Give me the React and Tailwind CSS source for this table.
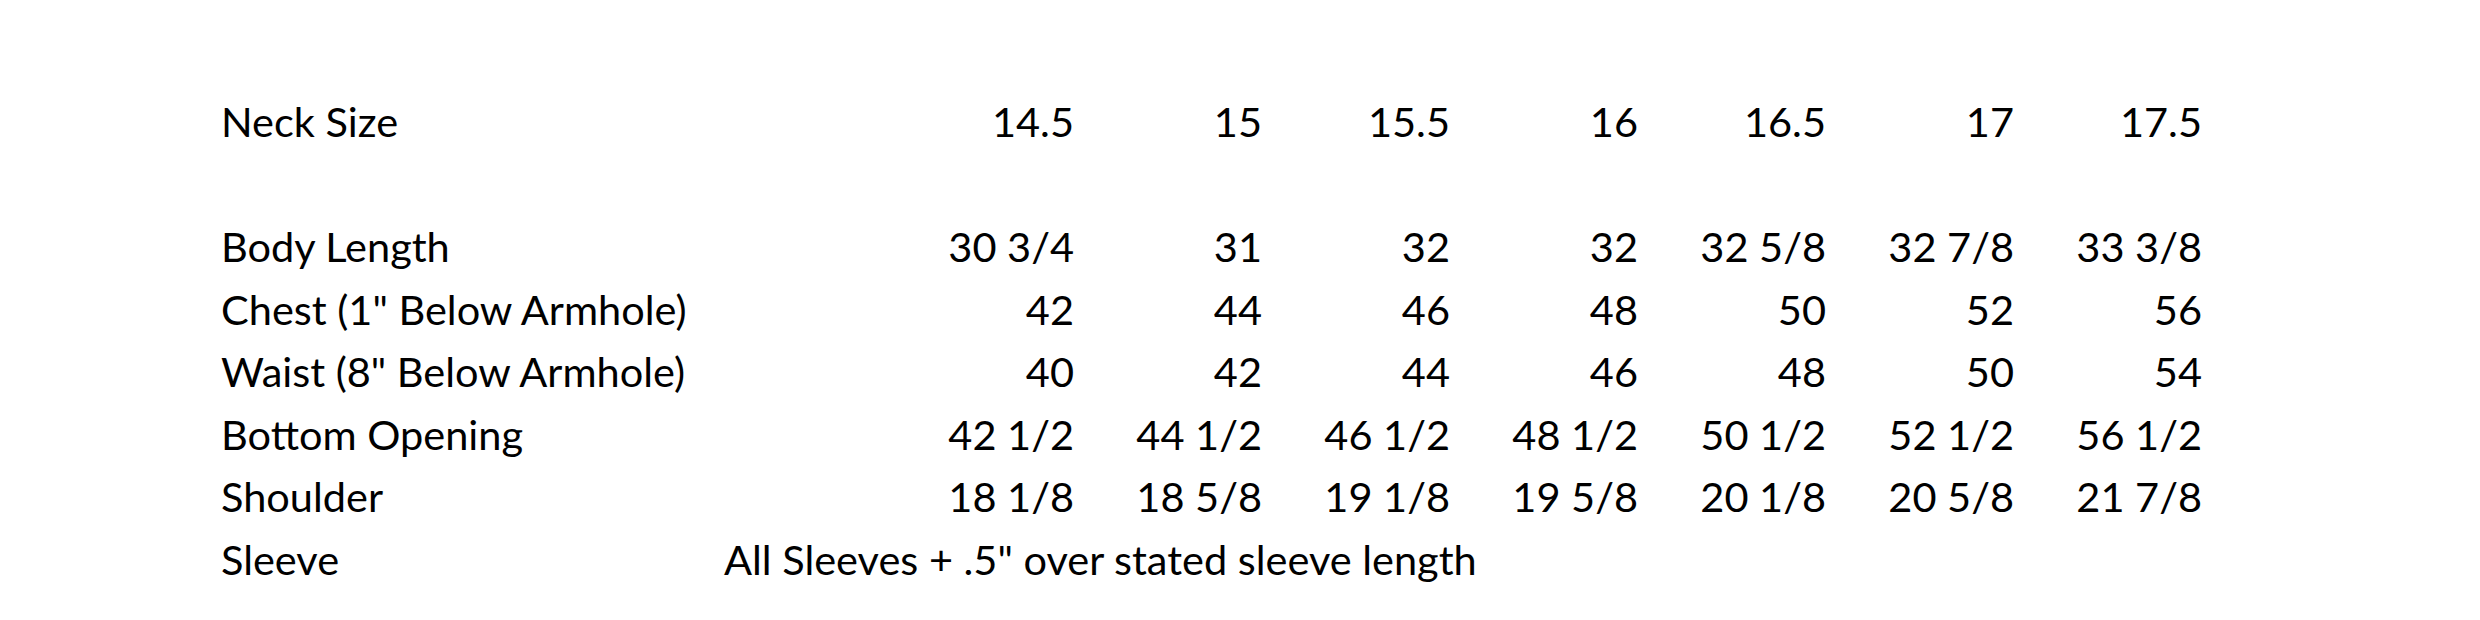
import React from "react";

const sizes = ["14.5", "15", "15.5", "16", "16.5", "17", "17.5"];

// Each row: label, then seven values
const rows = [
  ["Body Length", ["30 3/4", "31", "32", "32", "32 5/8", "32 7/8", "33 3/8"]],
  ["Chest (1\" Below Armhole)", ["42", "44", "46", "48", "50", "52", "56"]],
  ["Waist (8\" Below Armhole)", ["40", "42", "44", "46", "48", "50", "54"]],
  ["Bottom Opening", ["42 1/2", "44 1/2", "46 1/2", "48 1/2", "50 1/2", "52 1/2", "56 1/2"]],
  ["Shoulder", ["18 1/8", "18 5/8", "19 1/8", "19 5/8", "20 1/8", "20 5/8", "21 7/8"]],
];

function Row({ label, values }) {
  return (
    <>
      <div>{label}</div>
      <div></div>
      {values.map((v, i) => (
        <div key={i} className="text-right pr-[6px]">
          {v}
        </div>
      ))}
    </>
  );
}

export default function App() {
  return (
    <div className="w-[2480px] h-[620px] bg-white text-black overflow-hidden">
      <div
        className="pt-[90px] pl-[221px] grid grid-cols-[503px_168px_repeat(7,188px)] auto-rows-[62.5px] leading-[62.5px] text-[41.5px] whitespace-nowrap"
        style={{ fontFamily: "Lato, 'Open Sans', sans-serif" }}
      >
        <Row label="Neck Size" values={sizes} />
        <div className="col-span-9"></div>
        {rows.map(([label, values]) => (
          <Row key={label} label={label} values={values} />
        ))}
        <div>Sleeve</div>
        <div className="col-span-8">All Sleeves + .5" over stated sleeve length</div>
      </div>
    </div>
  );
}
